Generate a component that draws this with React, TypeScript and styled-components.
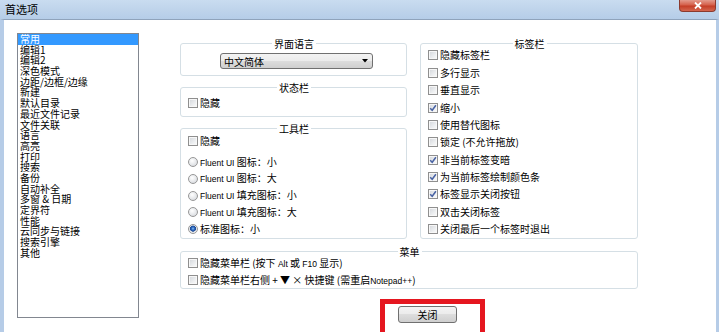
import React from "react";
import styled, { createGlobalStyle } from "styled-components";

const GlobalStyle = createGlobalStyle`
    html, body {
        margin: 0;
        padding: 0;
        background: #ffffff;
        overflow: hidden;
    }
    body {
        font-family: "Noto Sans CJK SC", "Liberation Sans", sans-serif;
        font-size: 10px;
        color: #000000;
    }
`;

const categories = [
    "常用", "编辑1", "编辑2", "深色模式", "边距/边框/边缘", "新建", "默认目录",
    "最近文件记录", "文件关联", "语言", "高亮", "打印", "搜索", "备份", "自动补全",
    "多窗 & 日期", "定界符", "性能", "云同步与链接", "搜索引擎", "其他",
];

const toolbarIcons = [
    { latin: "Fluent UI ", text: "图标：小", checked: false },
    { latin: "Fluent UI ", text: "图标：大", checked: false },
    { latin: "Fluent UI ", text: "填充图标：小", checked: false },
    { latin: "Fluent UI ", text: "填充图标：大", checked: false },
    { latin: "", text: "标准图标：小", checked: true },
];

const tabOptions = [
    { text: "隐藏标签栏", checked: false },
    { text: "多行显示", checked: false },
    { text: "垂直显示", checked: false },
    { text: "缩小", checked: true },
    { text: "使用替代图标", checked: false },
    { text: "锁定 (不允许拖放)", checked: false },
    { text: "非当前标签变暗", checked: true },
    { text: "为当前标签绘制颜色条", checked: true },
    { text: "标签显示关闭按钮", checked: true },
    { text: "双击关闭标签", checked: false },
    { text: "关闭最后一个标签时退出", checked: false },
];

const CheckBox: React.FC<{ checked?: boolean }> = ({ checked }) => (
    <Box>
        {checked && (
            <svg width="8" height="8" viewBox="0 0 8 8">
                <path d="M1.2 4.2 L3.2 6.3 L6.9 1.3" fill="none" stroke="#4862a3" strokeWidth="1.5" />
            </svg>
        )}
    </Box>
);

export default function App() {
    return (
        <>
            <GlobalStyle />
            <Window>
                <TitleBar>
                    <Title>首选项</Title>
                    <CloseButton>
                        <svg width="10" height="7" viewBox="0 0 10 7">
                            <path d="M2 0.5 L8 6.5 M8 0.5 L2 6.5" stroke="#ffffff" strokeWidth="1.8" />
                        </svg>
                    </CloseButton>
                </TitleBar>
                <Body>
                    <CategoryList>
                        {categories.map((name, index) => (
                            <CategoryItem key={index} $selected={index === 0}>{name}</CategoryItem>
                        ))}
                    </CategoryList>

                    <Settings>
                        <Columns>
                            <Column>
                                <Group $pt={4} $pb={6}>
                                    <Legend>界面语言</Legend>
                                    <Select>
                                        <span>中文简体</span>
                                        <svg width="6" height="4" viewBox="0 0 6 4">
                                            <path d="M0 0 H6 L3 3.5 Z" fill="#000000" />
                                        </svg>
                                    </Select>
                                </Group>

                                <Group $pt={4} $pb={7}>
                                    <Legend>状态栏</Legend>
                                    <Option><CheckBox /><OptionText>隐藏</OptionText></Option>
                                </Group>

                                <Group $pt={1} $pb={3}>
                                    <Legend>工具栏</Legend>
                                    <OptionList $gap={4.75} $lead={4.25}>
                                        <Option><CheckBox /><OptionText>隐藏</OptionText></Option>
                                        {toolbarIcons.map((item, index) => (
                                            <Option key={index}>
                                                <RadioDot $checked={item.checked} />
                                                <OptionText>
                                                    {item.latin && <Lat>{item.latin}</Lat>}
                                                    {item.text}
                                                </OptionText>
                                            </Option>
                                        ))}
                                    </OptionList>
                                </Group>
                            </Column>

                            <Group $pt={0} $pb={3}>
                                <Legend>标签栏</Legend>
                                <OptionList $gap={5.33} $lead={0.67}>
                                    {tabOptions.map((item, index) => (
                                        <Option key={index}>
                                            <CheckBox checked={item.checked} />
                                            <OptionText>{item.text}</OptionText>
                                        </Option>
                                    ))}
                                </OptionList>
                            </Group>
                        </Columns>

                        <Group $pt={0} $pb={2}>
                            <Legend>菜单</Legend>
                            <OptionList $gap={5} $lead={0}>
                                <Option>
                                    <CheckBox />
                                    <OptionText>隐藏菜单栏 (按下 <Lat>Alt</Lat> 或 <Lat>F10</Lat> 显示)</OptionText>
                                </Option>
                                <Option>
                                    <CheckBox />
                                    <OptionText>隐藏菜单栏右侧 + ▼ × 快捷键 (需重启<Lat>Notepad++</Lat>)</OptionText>
                                </Option>
                            </OptionList>
                        </Group>

                        <HighlightFrame>
                            <PushButton>关闭</PushButton>
                        </HighlightFrame>
                    </Settings>
                </Body>
            </Window>
        </>
    );
}

const Window = styled.div`
    width: 719px;
    height: 332px;
    display: flex;
    flex-direction: column;
    overflow: hidden;
`;

const TitleBar = styled.div`
    height: 19px;
    flex: none;
    display: flex;
    align-items: flex-start;
    justify-content: space-between;
    background: linear-gradient(180deg, #c9dcf0 0%, #bfd4eb 50%, #b5cde8 100%);
`;

const Title = styled.div`
    padding-left: 5px;
    font-size: 11px;
    line-height: 19px;
`;

const CloseButton = styled.div`
    width: 37px;
    height: 12px;
    margin-right: 3px;
    box-sizing: border-box;
    display: flex;
    align-items: center;
    justify-content: center;
    border: 1px solid #8b3a2e;
    border-top: none;
    border-radius: 0 0 4px 4px;
    background: linear-gradient(180deg, #e39b8d 0%, #d5604b 45%, #c43e27 55%, #d4664f 100%);
`;

const Body = styled.div`
    flex: 1;
    display: flex;
    align-items: flex-start;
    padding: 13px 0 0 13px;
    background: #ffffff;
    border-top: 1px solid #8fa3bb;
    border-left: 4px solid #b6cce7;
    border-right: 3px solid #b6cce7;
`;

const CategoryList = styled.ul`
    flex: none;
    width: 122px;
    height: 285px;
    box-sizing: border-box;
    margin: 0;
    padding: 0;
    list-style: none;
    border: 1px solid #828790;
    background: #ffffff;
`;

const CategoryItem = styled.li<{ $selected?: boolean }>`
    height: 10.7px;
    padding-left: 2px;
    line-height: 10.7px;
    font-size: 10px;
    white-space: nowrap;
    color: ${props => props.$selected ? "#ffffff" : "#000000"};
    background: ${props => props.$selected ? "#3399ff" : "transparent"};
`;

const Settings = styled.div`
    flex: none;
    width: 458px;
    margin: 5px 0 0 41px;
    display: flex;
    flex-direction: column;
    gap: 7px;
`;

const Columns = styled.div`
    display: grid;
    grid-template-columns: 227px 218px;
    column-gap: 13px;
    align-items: start;
`;

const Column = styled.div`
    display: flex;
    flex-direction: column;
    gap: 6px;
`;

const Group = styled.fieldset<{ $pt: number; $pb: number }>`
    margin: 0;
    min-width: 0;
    padding: ${props => props.$pt}px 6px ${props => props.$pb}px 7px;
    border: 1px solid #d5dfe5;
    border-radius: 3px;
`;

const Legend = styled.legend`
    margin: 0 auto;
    padding: 0 2px;
    font-size: 10px;
    line-height: 11px;
`;

const OptionList = styled.div<{ $gap: number; $lead: number }>`
    display: flex;
    flex-direction: column;
    gap: ${props => props.$gap}px;

    & > :first-child {
        margin-bottom: ${props => props.$lead}px;
    }
`;

const Option = styled.label`
    height: 12px;
    display: flex;
    align-items: center;
    gap: 2px;
    font-size: 10px;
    line-height: 12px;
    white-space: nowrap;
`;

const OptionText = styled.span`
    white-space: pre;
`;

const Lat = styled.span`
    font-family: "Liberation Sans", sans-serif;
    font-size: 8.5px;
`;

const Box = styled.span`
    flex: none;
    width: 10px;
    height: 10px;
    box-sizing: border-box;
    display: flex;
    align-items: center;
    justify-content: center;
    border: 1px solid #8f8f8f;
    background: linear-gradient(135deg, #d2d5da 0%, #eceef0 60%, #fcfcfc 100%);
    box-shadow: inset 0 0 0 1px #f7f7f7;
`;

const RadioDot = styled.span<{ $checked?: boolean }>`
    flex: none;
    width: 10px;
    height: 10px;
    box-sizing: border-box;
    border: 1px solid #979797;
    border-radius: 50%;
    background: ${props => props.$checked
        ? "radial-gradient(circle at 50% 45%, #8cc4f5 0, #2f69bf 1.5px, #1d4a94 2.8px, #e4e6e9 3.3px, #f8f8f8 100%)"
        : "radial-gradient(circle at 40% 35%, #ffffff 0, #e3e5e8 60%, #cdd1d6 100%)"};
`;

const Select = styled.div`
    width: 153px;
    height: 16px;
    margin-left: 32px;
    padding: 0 4px 0 3px;
    box-sizing: border-box;
    display: flex;
    align-items: center;
    justify-content: space-between;
    font-size: 10px;
    border: 1px solid #707070;
    border-radius: 3px;
    background: linear-gradient(180deg, #f3f3f3 0%, #ebebeb 50%, #dddddd 50%, #cfcfcf 100%);
`;

const HighlightFrame = styled.div`
    align-self: flex-start;
    margin: 3px 0 0 200px;
    padding: 2px 23px 12px 13px;
    border: 5px solid #e5161f;
`;

const PushButton = styled.div`
    width: 59px;
    height: 17px;
    box-sizing: border-box;
    display: flex;
    align-items: center;
    justify-content: center;
    font-size: 10px;
    border: 1px solid #707070;
    border-radius: 3px;
    background: linear-gradient(180deg, #f3f3f3 0%, #ebebeb 50%, #dddddd 50%, #cfcfcf 100%);
`;
